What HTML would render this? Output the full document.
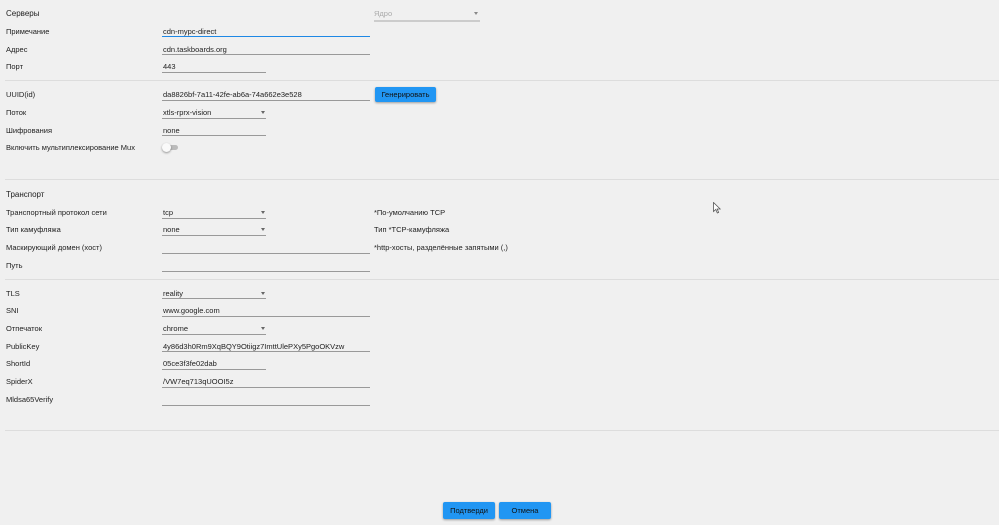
<!DOCTYPE html>
<html><head><meta charset="utf-8"><style>
*{margin:0;padding:0;box-sizing:border-box}
body{width:999px;height:525px;background:#f0f0f0;position:relative;overflow:hidden;font-family:"Liberation Sans","DejaVu Sans",sans-serif;font-size:7.5px;color:#222}
.l,.v{position:absolute;line-height:10px;white-space:nowrap;margin-top:1px}
.l{left:6px}
.u{position:absolute;height:1px;background:#999}
.s{position:absolute;left:5px;width:994px;height:1px;background:#ddd}
.a{position:absolute;width:0;height:0;border-left:2.5px solid transparent;border-right:2.5px solid transparent;border-top:3px solid #666}
.b{position:absolute;background:#2196f3;color:#111;text-align:center;box-shadow:0 1px 2px rgba(0,0,0,.35);border-radius:2px}
</style></head><body>
<div class="l" style="top:8px;font-size:8px">Серверы</div>
<div class="v" style="left:374px;top:8px;color:#aaa">Ядро</div>
<div class="a" style="left:474px;top:12px;border-top-color:#888"></div>
<div class="u" style="left:374px;top:20px;width:106px;height:2px;background:#ccc"></div>

<div class="l" style="top:26px">Примечание</div>
<div class="v" style="left:163px;top:26px">cdn-mypc-direct</div>
<div class="u" style="left:162px;top:36px;width:208px;background:#1e88e5"></div>
<div class="l" style="top:44px">Адрес</div>
<div class="v" style="left:163px;top:44px">cdn.taskboards.org</div>
<div class="u" style="left:162px;top:54px;width:208px"></div>
<div class="l" style="top:61px">Порт</div>
<div class="v" style="left:163px;top:61px">443</div>
<div class="u" style="left:162px;top:72px;width:104px"></div>
<div class="s" style="top:80px"></div>

<div class="l" style="top:89px">UUID(id)</div>
<div class="v" style="left:163px;top:89px">da8826bf-7a11-42fe-ab6a-74a662e3e528</div>
<div class="u" style="left:162px;top:100px;width:208px"></div>
<div class="b" style="left:375px;top:87px;width:61px;height:15px;line-height:15px">Генерировать</div>
<div class="l" style="top:107px">Поток</div>
<div class="v" style="left:163px;top:107px">xtls-rprx-vision</div>
<div class="a" style="left:261px;top:111px"></div>
<div class="u" style="left:162px;top:118px;width:104px"></div>
<div class="l" style="top:125px">Шифрования</div>
<div class="v" style="left:163px;top:125px">none</div>
<div class="u" style="left:162px;top:135px;width:104px"></div>
<div class="l" style="top:142px">Включить мультиплексирование Mux</div>
<div style="position:absolute;left:165px;top:145px;width:13px;height:5px;border-radius:3px;background:#bbb"></div>
<div style="position:absolute;left:162px;top:143px;width:9px;height:9px;border-radius:50%;background:#fafafa;box-shadow:0 1px 2px rgba(0,0,0,.4)"></div>
<div class="s" style="top:179px"></div>

<div class="l" style="top:189px;font-size:8px">Транспорт</div>
<div class="l" style="top:207px">Транспортный протокол сети</div>
<div class="v" style="left:163px;top:207px">tcp</div>
<div class="a" style="left:261px;top:211px"></div>
<div class="u" style="left:162px;top:218px;width:104px"></div>
<div class="v" style="left:374px;top:207px">*По-умолчанию TCP</div>
<div class="l" style="top:224px">Тип камуфляжа</div>
<div class="v" style="left:163px;top:224px">none</div>
<div class="a" style="left:261px;top:228px"></div>
<div class="u" style="left:162px;top:235px;width:104px"></div>
<div class="v" style="left:374px;top:224px">Тип *TCP-камуфляжа</div>
<div class="l" style="top:242px">Маскирующий домен (хост)</div>
<div class="u" style="left:162px;top:253px;width:208px"></div>
<div class="v" style="left:374px;top:242px">*http-хосты, разделённые запятыми (,)</div>
<div class="l" style="top:260px">Путь</div>
<div class="u" style="left:162px;top:271px;width:208px"></div>
<div class="s" style="top:279px"></div>

<div class="l" style="top:288px">TLS</div>
<div class="v" style="left:163px;top:288px">reality</div>
<div class="a" style="left:261px;top:292px"></div>
<div class="u" style="left:162px;top:298px;width:104px"></div>
<div class="l" style="top:305px">SNI</div>
<div class="v" style="left:163px;top:305px">www.google.com</div>
<div class="u" style="left:162px;top:316px;width:208px"></div>
<div class="l" style="top:323px">Отпечаток</div>
<div class="v" style="left:163px;top:323px">chrome</div>
<div class="a" style="left:261px;top:327px"></div>
<div class="u" style="left:162px;top:334px;width:104px"></div>
<div class="l" style="top:341px">PublicKey</div>
<div class="v" style="left:163px;top:341px">4y86d3h0Rm9XqBQY9Otiigz7ImttUlePXy5PgoOKVzw</div>
<div class="u" style="left:162px;top:351px;width:208px"></div>
<div class="l" style="top:358px">ShortId</div>
<div class="v" style="left:163px;top:358px">05ce3f3fe02dab</div>
<div class="u" style="left:162px;top:369px;width:104px"></div>
<div class="l" style="top:376px">SpiderX</div>
<div class="v" style="left:163px;top:376px">/VW7eq713qUOOI5z</div>
<div class="u" style="left:162px;top:387px;width:208px"></div>
<div class="l" style="top:394px">Mldsa65Verify</div>
<div class="u" style="left:162px;top:405px;width:208px"></div>
<div class="s" style="top:430px"></div>

<svg style="position:absolute;left:713px;top:202px" width="8" height="12" viewBox="0 0 8 12"><path d="M.5 .5V9.5L2.8 7.4 4.3 11 5.6 10.4 4.2 7H7.2Z" fill="#fff" stroke="#555" stroke-width=".8"/></svg>

<div class="b" style="left:443px;top:502px;width:52px;height:17px;line-height:17px">Подтверди</div>
<div class="b" style="left:499px;top:502px;width:52px;height:17px;line-height:17px">Отмена</div>
</body></html>
